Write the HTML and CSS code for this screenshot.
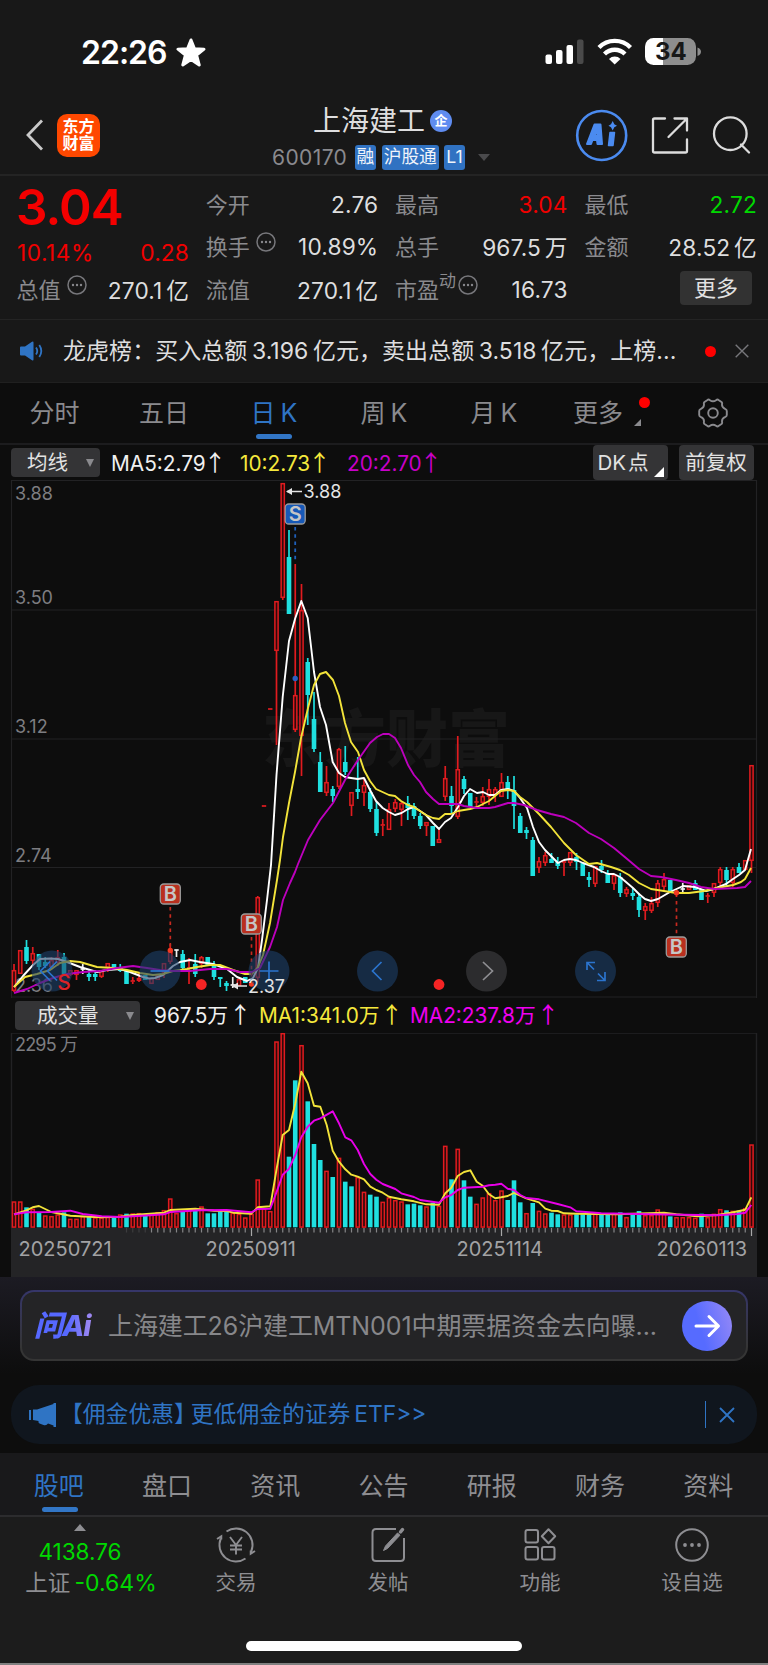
FILE: index.html
```html
<!DOCTYPE html>
<html lang="zh-CN">
<head>
<meta charset="utf-8">
<title>上海建工 600170</title>
<link rel="stylesheet" href="styles.css">
</head>
<body>
<div class="phone">
  <div class="status">
    <div class="clock"><span class="time">22:26</span>
      <svg width="30" height="30" viewBox="-15 -15 30 30"><path d="M0-13 3.500-4.200 13-3.800 5.600 2.200 8.200 12 0 6.600-8.200 12-5.600 2.200-13-3.800-3.500-4.200Z" fill="#fff" stroke="#fff" stroke-width="3" stroke-linejoin="round"/></svg>
    </div>
    <svg class="status-icons" width="160" height="30" viewBox="545 37 160 30">
      <g fill="#fff"><rect x="545.500" y="54.500" width="6.500" height="9.500" rx="2"/><rect x="556" y="50" width="6.500" height="14" rx="2"/><rect x="566.500" y="45" width="6.500" height="19" rx="2"/><rect x="577" y="39.500" width="6.500" height="24.500" rx="2" fill="#4a4a4a"/></g>
      <g fill="none" stroke="#fff" stroke-width="4.300"><path d="M599 47.500a22 22 0 0 1 31.500 0"/><path d="M604.500 54a14.500 14.500 0 0 1 20.500 0"/></g>
      <path d="M609 59a8 8 0 0 1 11.500 0L614.700 64.500Z" fill="#fff"/>
      <clipPath id="bat"><rect x="645" y="38" width="51" height="27" rx="8.500"/></clipPath>
      <g clip-path="url(#bat)"><rect x="645" y="38" width="18" height="27" fill="#fff"/><rect x="663" y="38" width="33" height="27" fill="#8e8e8e"/></g>
      <path d="M697.500 47.500q3.500 1.500 3.500 4.300t-3.500 4.300Z" fill="#8e8e8e"/>
      <text x="670.800" y="60.300" class="bat-text" text-anchor="middle">34</text>
    </svg>
  </div>

  <header class="header">
    <div class="head-left">
      <svg width="20" height="34" viewBox="0 0 20 34"><path d="M17 2.500 3 17 17 31.500" fill="none" stroke="#c9c9c9" stroke-width="2.800"/></svg>
      <div class="logo"><span>东方</span><span>财富</span></div>
    </div>
    <div class="head-mid">
      <div class="title"><span>上海建工</span><i class="corp">企</i></div>
      <div class="sub"><span class="code">600170</span><b class="tag">融</b><b class="tag">沪股通</b><b class="tag">L1</b><i class="drop"></i></div>
    </div>
    <svg class="head-right" width="180" height="60" viewBox="574 105 180 60">
      <circle cx="601.700" cy="135.500" r="24.500" fill="none" stroke="#4b8bf0" stroke-width="2.600"/>
      <g fill="#4b8bf0" stroke="#4b8bf0" stroke-linejoin="round"><path fill-rule="evenodd" stroke-width="2" d="M594.500 124.500h6l1.500 19.500h-4.500l-.5-4h-4.500l-1.500 4h-4Z M597 129.500l-2.500 6.500h3Z"/><path stroke-width="1.500" d="M610 132.500h4.500l-1.500 13h-4.500Z"/><path stroke="none" d="M612.700 121 614.300 124.200 617 125.700 614.300 127.200 612.700 130.500 611 127.200 608.500 125.700 611 124.200Z"/></g>
      <g fill="none" stroke="#dcdcdc" stroke-width="2.300" stroke-linecap="round" stroke-linejoin="round"><path d="M665 118.500h-10.500q-1.500 0-1.500 1.500v31q0 1.500 1.500 1.500h31q1.500 0 1.500-1.500v-11.500M674.500 118.500h12.500v12M686.500 119 668.500 137"/><circle cx="730.300" cy="133.700" r="16.300"/><path d="M741 144.500 749 152.500"/></g>
    </svg>
  </header>

  <section class="quote">
    <div class="big">3.04</div>
    <div class="cell r1 c2"><span>今开</span><b>2.76</b></div>
    <div class="cell r1 c3"><span>最高</span><b class="red">3.04</b></div>
    <div class="cell r1 c4"><span>最低</span><b class="green">2.72</b></div>
    <div class="cell pct"><b class="red p1">10.14%</b><b class="red">0.28</b></div>
    <div class="cell r2 c2"><span>换手<svg class="dots" viewBox="0 0 20 20"><use href="#dots"/></svg></span><b>10.89%</b></div>
    <div class="cell r2 c3"><span>总手</span><b>967.5 万</b></div>
    <div class="cell r2 c4"><span>金额</span><b>28.52 亿</b></div>
    <div class="cell r3 c1"><span>总值<svg class="dots" viewBox="0 0 20 20"><use href="#dots"/></svg></span><b>270.1 亿</b></div>
    <div class="cell r3 c2"><span>流值</span><b>270.1 亿</b></div>
    <div class="cell r3 c3"><span>市盈<sup>动</sup><svg class="dots tight" viewBox="0 0 20 20"><use href="#dots"/></svg></span><b>16.73</b></div>
    <div class="cell r3 c4 more"><button class="more-btn">更多</button></div>
  </section>
  <svg class="defs" width="0" height="0"><defs><g id="dots"><circle cx="10" cy="10" r="9" fill="none" stroke="#77777b" stroke-width="1.500"/><circle cx="6" cy="10" r="1.200" fill="#88888c"/><circle cx="10" cy="10" r="1.200" fill="#88888c"/><circle cx="14" cy="10" r="1.200" fill="#88888c"/></g></defs></svg>

  <section class="news">
    <svg width="24" height="20" viewBox="0 0 24 20"><path d="M1 5.500h4L12 .8Q13.500 0 13.500 1.500V18.500Q13.500 20 12 19.200L5 14.500H1Q0 14.500 0 13.500V6.500Q0 5.500 1 5.500Z" fill="#2f74c4"/><path d="M16 6.500q2.500 3.500 0 7M19.300 4q4 6 0 12" fill="none" stroke="#2f74c4" stroke-width="1.800"/></svg>
    <span class="news-text">龙虎榜：买入总额 3.196 亿元，卖出总额 3.518 亿元，上榜...</span>
    <i class="dot"></i>
    <svg class="close" width="14" height="14" viewBox="0 0 14 14"><path d="M.7.7 13.300 13.300M13.300.7.7 13.300" stroke="#77777b" stroke-width="1.400"/></svg>
  </section>

  <nav class="periods">
    <span>分时</span><span>五日</span><span class="on">日 K</span><span>周 K</span><span>月 K</span>
    <span class="more-tab">更多<i class="badge"></i><i class="corner"></i></span>
    <span class="gear"><svg width="30" height="30" viewBox="-15 -15 30 30" fill="none" stroke="#8a8a8e" stroke-width="1.900"><path stroke-linejoin="round" d="M-5.500-13 Q-4.500-14-3-12.800 Q0-10.600 3-12.800 Q4.500-14 5.500-13 L8.500-11 Q9.500-10 9-8.500 Q8.800-5.500 12-4.200 Q13.800-3.500 13.800-2 V2 Q13.800 3.500 12 4.200 Q8.800 5.500 9 8.500 Q9.500 10 8.500 11 L5.500 13 Q4.500 14 3 12.800 Q0 10.600-3 12.800 Q-4.500 14-5.500 13 L-8.500 11 Q-9.500 10-9 8.500 Q-8.800 5.500-12 4.200 Q-13.800 3.500-13.800 2 V-2 Q-13.800-3.500-12-4.200 Q-8.800-5.500-9-8.500 Q-9.500-10-8.500-11Z"/><circle r="4.800"/></svg></span>
  </nav>

  <div class="tools">
    <button class="sel s1">均线<i></i></button>
    <span class="ma w">MA5:2.79<u>↑</u></span><span class="ma y">10:2.73<u>↑</u></span><span class="ma m">20:2.70<u>↑</u></span>
    <button class="sq dk">DK 点<i></i></button><button class="sq">前复权</button>
  </div>
  <svg id="kline" class="kline" width="768" height="518" viewBox="0 480 768 518"></svg>

  <div class="tools vol-tools">
    <button class="sel s2">成交量<i></i></button>
    <span class="ma w">967.5万<u>↑</u></span><span class="ma y">MA1:341.0万<u>↑</u></span><span class="ma m">MA2:237.8万<u>↑</u></span>
  </div>
  <svg id="volume" class="volume" width="768" height="195" viewBox="0 1033 768 195"></svg>
  <div class="axis">
    <svg id="ticks" class="ticks" width="746" height="10" viewBox="11 0 746 10"></svg>
    <div class="dates"><span class="d1">20250721</span><span class="d2">20250911</span><span class="d3">20251114</span><span class="d4">20260113</span></div>
  </div>

  <section class="ask">
    <div class="ask-box">
      <span class="ask-logo">问Ai</span>
      <span class="ask-text">上海建工26沪建工MTN001中期票据资金去向曝...</span>
      <svg width="50" height="50" viewBox="0 0 50 50"><defs><linearGradient id="g" x1="0" x2="1" y1=".6" y2=".3"><stop offset=".35" stop-color="#566bff"/><stop offset="1" stop-color="#9187f7"/></linearGradient></defs><circle cx="25" cy="25" r="25" fill="url(#g)"/><path d="M14 25h22M27 15.500 36.500 25 27 34.500" fill="none" stroke="#fff" stroke-width="3" stroke-linecap="round" stroke-linejoin="round"/></svg>
    </div>
  </section>

  <section class="promo">
    <svg width="27" height="24" viewBox="0 0 27 24" fill="#2f74c4"><path d="M0 7h2v10H0ZM4 6.500h4L24.500 1V0H27V24H24.500V22.500L19 20.500Q17.500 23 14.500 22L10.500 20.500Q9 19.500 9.500 18L4 17Z"/></svg>
    <span class="promo-text"><span class="bracket">【佣金优惠】</span>更低佣金的证券 ETF&gt;&gt;</span>
    <i class="bar"></i>
    <svg class="close" width="16" height="16" viewBox="0 0 16 16"><path d="M1 1 15 15M15 1 1 15" stroke="#2f74c4" stroke-width="1.800"/></svg>
  </section>

  <nav class="sections">
    <span class="on">股吧</span><span>盘口</span><span>资讯</span><span>公告</span><span>研报</span><span>财务</span><span>资料</span>
  </nav>

  <footer class="bottom">
    <div class="index"><i></i><b>4138.76</b><span>上证 <em>-0.64%</em></span></div>
    <div class="act"><svg width="40" height="36" viewBox="-20 -18 40 36" fill="none" stroke="#8e8e92" stroke-width="1.900"><path d="M-9.500-13.500A16.500 16.500 0 0 1 15.200 6.500M9.500 13.500A16.500 16.500 0 0 1-15.200-6.500M-19-6-14.700-8.800V-5.500M19 6 14.700 8.800V5.500"/><path d="M-6-8 0 0 6-8M0 0V9.500M-6 .5H6M-6 4.500H6"/></svg><span>交易</span></div>
    <div class="act"><svg width="40" height="36" viewBox="-20 -18 40 36" fill="none" stroke="#8e8e92" stroke-width="2"><path d="M8-16H-12Q-15.500-16-15.500-12.500V12.500Q-15.500 16-12 16H12.500Q16 16 16 12.500V-7"/><path d="M-4.500 5.500-2.500 1 9.500-12 12-9.800-.5 3.500Z" fill="#8e8e92" stroke-width="1"/><path d="M12.500-13 14.500-15.500" stroke-width="3.500" stroke-linecap="round"/></svg><span>发帖</span></div>
    <div class="act"><svg width="40" height="36" viewBox="-20 -18 40 36" fill="none" stroke="#8e8e92" stroke-width="2"><rect x="-14.500" y="-15" width="12.500" height="12.500" rx="2"/><rect x="-14.500" y="2" width="12.500" height="12.500" rx="2"/><rect x="2" y="2" width="12.500" height="12.500" rx="2"/><path d="M8.500-15.700 15.200-8.700 8.500-1.700 1.800-8.700Z" stroke-linejoin="round"/></svg><span>功能</span></div>
    <div class="act"><svg width="40" height="36" viewBox="-20 -18 40 36" fill="none" stroke="#8e8e92" stroke-width="2"><circle r="15.800"/><g fill="#8e8e92" stroke="none"><circle cx="-7" r="1.900"/><circle r="1.900"/><circle cx="7" r="1.900"/></g></svg><span>设自选</span></div>
  </footer>
  <div class="home"><i></i></div>
</div>
<script src="chart.js"></script>
</body>
</html>
```

FILE: styles.css
```css
* { box-sizing: border-box; }
body {
  margin: 0;
  background: #0d0d0d;
  color: #dededf;
  font-family: Inter, "Noto Sans CJK SC", sans-serif;
  font-weight: 400;
}
i, em { font-style: normal; }
b { font-weight: 400; }
svg { display: block; flex: none; }
button { border: 0; padding: 0; margin: 0; background: #343436; color: #e2e2e2; font: inherit; border-radius: 4px; }
.phone { width: 768px; height: 1665px; overflow: hidden; display: flex; flex-direction: column; }
.phone > * { flex: none; }
.red { color: #f00000; }
.green { color: #00d800; }
.defs { position: absolute; }

.status { height: 104px; padding: 0 63px 0 81px; background: #181818; display: flex; justify-content: space-between; align-items: center; }
.clock { display: flex; align-items: center; gap: 9px; color: #fff; padding-top: 2px; }
.time { font-size: 32px; font-weight: 600; line-height: 40px; letter-spacing: -1px; width: 86px; white-space: nowrap; }
.bat-text { font-size: 24px; font-weight: 700; fill: #181818; }

.header { height: 72px; padding: 0 14px 8px 25px; background: #181818; border-bottom: 2px solid #242424; display: grid; grid-template-columns: 180px 1fr 180px; grid-template-rows: 62px; align-items: center; }
.head-left { display: flex; align-items: center; gap: 12px; }
.logo { width: 43px; height: 43px; border-radius: 10px; background: #ff4800; color: #fff; font-size: 16px; font-weight: 700; line-height: 17px; display: flex; flex-direction: column; align-items: center; justify-content: center; }
.head-mid { display: flex; flex-direction: column; padding-top: 7px; }
.title { display: flex; align-items: center; gap: 5px; height: 34px; font-size: 28px; padding-left: 108px; white-space: nowrap; }
.title span { margin-top: -2px; }
.corp { width: 22px; height: 22px; margin-top: 1px; border-radius: 11px; background: #5f8cf0; color: #fff; font-size: 13px; line-height: 21px; font-weight: 700; text-align: center; }
.sub { display: flex; align-items: center; gap: 5.500px; padding-left: 67px; height: 37px; padding-top: 3px; white-space: nowrap; }
.code { width: 77px; font-size: 21px; letter-spacing: .4px; color: #8a8a8e; }
.tag { height: 25px; padding: 0 2px; border-radius: 3px; background: #3072c2; color: #f0f4fa; font-size: 17.700px; line-height: 24px; }
.drop { margin-left: 8px; border: 6px solid transparent; border-top: 7px solid #4a4a4c; border-bottom: 0; }

.quote { height: 144px; padding: 7px 11px 0 17px; background: #181818; border-bottom: 1px solid #242424; display: grid; grid-template-columns: repeat(4, 172px); grid-template-rows: 42px 42px 42px; column-gap: 17.300px; font-size: 22px; }
.big { color: #f40000; font-size: 49.500px; line-height: 48px; font-weight: 600; letter-spacing: -.9px; margin-left: -1px; grid-row: 1; grid-column: 1; }
.cell { display: flex; align-items: center; justify-content: space-between; white-space: nowrap; height: 42px; }
.cell span { color: #8a8a8e; display: flex; align-items: center; margin-top: -3px; margin-left: -.5px; }
.cell b { font-size: 22.700px; word-spacing: -2.800px; letter-spacing: .15px; }
.cell sup { font-size: 17px; line-height: 17px; padding-bottom: 12px; }
.r1 { grid-row: 1; } .r2 { grid-row: 2; } .r3 { grid-row: 3; padding-top: 2px; }
.c1 { grid-column: 1; } .c2 { grid-column: 2; } .c3 { grid-column: 3; } .c4 { grid-column: 4; }
.pct { grid-row: 2; grid-column: 1; padding-top: 13px; }
.cell .p1 { letter-spacing: .5px; }
.dots { width: 20px; height: 20px; margin: 0 0 6px 6px; }
.tight { margin-left: 2px; }
.more { justify-content: flex-end; padding-right: 5px; padding-top: 0; }
.more-btn { width: 72px; height: 34px; font-size: 22px; line-height: 32px; background: #323232; }

.news { height: 63px; padding: 0 19px 0 20px; background: #181818; border-bottom: 1px solid #202020; display: flex; align-items: center; }
.news-text { margin: -4px 0 0 19px; width: 642px; font-size: 23px; white-space: nowrap; word-spacing: -2px; letter-spacing: .05px; }
.dot { width: 11px; height: 11px; border-radius: 50%; background: #f00; }
.close { margin-left: auto; }

.periods { height: 62px; border-bottom: 2px solid #1c1c1e; display: grid; grid-template-columns: 109px 110px 110px 110px 110px 98px 1fr; font-size: 25px; line-height: 60px; text-align: center; color: #8a8a8e; white-space: nowrap; word-spacing: -2px; }
.periods span { position: relative; }
.periods .on, .sections .on { color: #2f74c4; }
.periods .on::after, .sections .on::after { content: ""; position: absolute; left: 50%; margin-left: -18px; bottom: 4px; width: 36px; height: 5px; border-radius: 2.500px; background: #3276c6; }
.badge { position: absolute; left: 90px; top: 14px; width: 11px; height: 11px; border-radius: 50%; background: #f00; }
.corner { position: absolute; left: 85px; top: 36px; border-left: 7px solid transparent; border-bottom: 7px solid #8a8a8e; }
.gear { display: flex; justify-content: center; align-items: center; padding-left: 11px; }

.tools { height: 35px; padding: 0 14.500px 0 11px; display: flex; align-items: center; font-size: 20.500px; white-space: nowrap; }
.sel { height: 29px; display: flex; align-items: center; justify-content: space-between; line-height: 28px; }
.sel i { border: 4.500px solid transparent; border-top: 8px solid #8a8a8e; border-bottom: 0; }
.s1 { width: 89px; padding: 0 6px 0 16px; margin-right: 11px; font-size: 20.500px; }
.s2 { width: 125px; padding: 0 6px 0 22px; margin-right: 14px; font-size: 20.500px; }
.ma { font-size: 20.800px; line-height: 33px; height: 32px; }
.ma u { text-decoration: none; font-family: "Noto Sans CJK SC", sans-serif; font-size: 22.500px; line-height: 20px; margin-left: -2px; }
.w { color: #f0f0f0; } .y { color: #f5e83c; } .m { color: #c800c8; }
.tools .w { width: 129px; } .tools .y { width: 107px; }
.vol-tools { padding-left: 15px; }
.vol-tools .w { width: 105px; } .vol-tools .y { width: 151px; }
.vol-tools .m { color: #f000f0; }
.vol-tools .ma { line-height: 32px; }
.vol-tools .ma u { margin-left: 1px; }
.sq { width: 75px; height: 35px; line-height: 34px; margin-left: 11px; font-size: 20.500px; position: relative; word-spacing: -4px; }
.tools .dk { margin-left: auto; padding-right: 14px; }
.dk i { position: absolute; right: 4px; bottom: 3px; border-left: 10px solid transparent; border-bottom: 10px solid #fff; }

.kline text, .volume text { font-size: 18px; fill: #7d7d81; }
.kline .lab { fill: #e4e4e4; }
.kline .water { font-family: "Noto Sans CJK SC", sans-serif; font-size: 62px; font-weight: 900; fill: #171717; }
.kline .flag { font-size: 20px; font-weight: 600; fill: #c6c6c6; text-anchor: middle; }
.kline .sell { font-size: 21px; font-weight: 500; fill: #dc2328; text-anchor: middle; }

.axis { height: 49px; margin: 0 11px; background: #242426; color: #a2a2a4; font-size: 20px; }
.dates { display: grid; grid-template-columns: 187px 251px 200px 1fr; padding-left: 7.500px; line-height: 22px; }

.ask { height: 108px; padding: 13px 20px 0; background: linear-gradient(#1c1b23, #0d0d0d 90%); }
.ask-box { height: 71px; border: 2px solid transparent; border-radius: 14px; background: linear-gradient(#242426, #242426) padding-box, linear-gradient(#36366a, #353535 80%) border-box; padding: 0 14px 0 12px; display: flex; align-items: center; }
.ask-logo { width: 74px; font-size: 29px; line-height: 34px; font-weight: 800; font-style: italic; letter-spacing: -1px; background: linear-gradient(90deg, #5668ff 45%, #a58bf0 80%); background-clip: text; -webkit-background-clip: text; color: transparent; }
.ask-text { width: 574px; margin-top: -3px; font-size: 25px; color: #87878a; white-space: nowrap; letter-spacing: -.1px; }

.promo { height: 59px; margin: 0 11px; padding: 0 22px 0 18px; border-radius: 28px; background: #10161e; color: #2f74c4; display: flex; align-items: center; }
.promo-text { font-size: 22.800px; white-space: nowrap; margin: -5px 0 0 4px; word-spacing: -2.500px; }
.bracket { margin-right: -6px; }
.bar { margin-left: auto; width: 1.500px; height: 27px; background: #2f74c4; }
.promo .close { margin-left: 13px; }

.sections { height: 64px; margin-top: 9px; padding: 0 5.500px 0 4.500px; background: #19191b; border-bottom: 2px solid #2c2c2e; display: grid; grid-template-columns: repeat(7, 1fr); text-align: center; font-size: 25px; line-height: 66px; color: #8e8e92; }
.sections span { position: relative; height: 62px; }
.sections .on::after { bottom: 3px; margin-left: -17px; }
.bottom { height: 84px; background: #1c1c1c; display: grid; grid-template-columns: 160px repeat(4, 152px); color: #8e8e92; white-space: nowrap; }
.index { display: flex; flex-direction: column; align-items: center; padding-top: 7px; font-size: 22.500px; }
.index i { border: 6.500px solid transparent; border-bottom: 7px solid #8e8e92; border-top: 0; }
.index b { line-height: 26px; margin-top: 8px; color: #00d800; }
.index span { line-height: 30px; margin-top: 3px; padding-left: 22px; word-spacing: -2px; }
.index em { color: #00d800; font-size: 23px; }
.act { display: flex; flex-direction: column; align-items: center; padding-top: 10px; font-size: 20.500px; }
.act span { line-height: 30px; margin-top: 5px; }
.home { height: 64px; background: #1c1c1c; border-bottom: 2px solid #808080; padding-top: 40px; }
.home i { display: block; width: 276px; height: 10px; margin: 0 auto; border-radius: 5px; background: #fff; }
```

FILE: chart.js
```js
const RED = '#e11b1f', CYAN = '#1fe0e0';
const x = i => 14 + 6.25 * i;
const line = (x1, y1, x2, y2, c, w = 1.7, extra = '') =>
  `<path d="M${x1} ${y1}L${x2} ${y2}" stroke="${c}" stroke-width="${w}" fill="none" ${extra}/>`;

// Candles: colour, high, body top, body bottom, low
const candles = `r 964 970 991 992;r 950 950 974 974;c 940 947 961 964;r 947 953 961 964;c 954 954 967 970;c 957 962 966 968;r 957 960 967 970;r 950 957 963 966;c 953 957 974 975;r 970 970 975 976;r 970 970 975 980;w 964 969 969 974;c 970 974 977 981;c 970 974 977 981;r 971 971 977 978;r 963 963 968 972;c 964 964 968 968;c 964 968 971 972;c 970 970 984 984;r 977 981 982 984;r 973 978 981 982;c 975 975 980 980;r 978 978 984 984;r 975 975 980 980;r 963 963 973 978;r 944 951 962 964;w 950 950 950 957;c 950 954 968 970;r 958 968 969 984;c 954 964 974 977;r 956 957 964 968;c 957 957 966 966;c 961 965 977 980;c 977 977 979 987;c 981 983 986 991;w 977 985 986 988;r 979 979 986 986;c 977 977 983 983;r 982 982 985 986;r 896 897 978 982;r 806 806 806 806;r 709 709 709 709;r 601 601 651 745;r 483 483 598 600;c 530 557 614 614;r 564 695 730 732;r 584 610 736 776;c 658 662 695 725;c 692 719 749 752;c 752 762 792 792;r 766 782 793 796;c 786 789 796 802;r 748 749 787 789;c 746 762 772 775;r 792 792 806 816;c 757 789 792 799;r 778 785 793 806;c 788 792 809 812;c 802 809 833 836;r 819 825 826 836;r 803 809 830 830;r 799 802 809 812;r 802 803 810 826;c 796 803 808 820;c 803 806 816 819;c 813 816 826 829;r 822 822 826 836;c 826 826 846 846;r 828 839 843 843;r 766 778 797 801;c 786 796 806 814;r 736 769 817 819;c 776 779 789 794;c 793 793 807 807;r 797 802 803 807;r 787 796 803 806;r 779 789 797 805;r 787 789 795 802;r 773 782 797 797;c 776 782 789 799;c 776 790 806 829;c 813 816 833 833;c 827 830 833 839;c 837 840 876 876;r 857 861 868 873;r 852 855 863 866;c 853 859 863 863;c 857 862 866 869;r 860 862 863 876;r 852 852 863 866;c 853 857 862 870;c 863 863 876 876;c 872 877 880 887;r 866 866 884 887;c 860 866 870 873;c 870 873 883 883;r 875 875 884 890;c 873 877 893 897;r 887 889 894 897;c 888 893 896 900;c 893 897 910 917;r 903 906 911 920;r 897 903 911 913;r 880 883 903 907;r 873 879 887 890;c 880 880 891 891;r 890 892 893 897;w 883 889 889 893;r 885 885 890 890;c 880 883 890 890;c 889 889 900 900;r 893 896 897 903;r 883 883 893 897;r 867 869 883 887;c 867 870 880 887;r 867 869 883 887;c 863 867 873 873;r 860 860 870 870;r 765 765 861 873`.split(';').map(s => s.split(' '));

const candle = ([c, ...v], i) => {
  const [hi, top, bot, lo] = v.map(Number), cx = x(i);
  const col = c === 'r' ? RED : c === 'c' ? CYAN : '#f0f0f0';
  let s = '';
  if (bot - top < 2) s += line(cx - 2.2, top, cx + 2.2, top, col, 1.7);
  else if (c === 'c') s += `<rect x="${cx - 2.3}" y="${top}" width="4.6" height="${bot - top}" fill="${col}"/>`;
  else s += `<rect x="${cx - 1.6}" y="${top + .7}" width="3.2" height="${bot - top - 1.4}" fill="#30090a" stroke="${col}" stroke-width="1.5"/>`;
  if (top > hi) s += line(cx, hi, cx, top, col);
  if (lo > bot) s += line(cx, bot, cx, lo, col);
  return s;
};

// Moving-average line through "x,y x,y ..." points
const curve = (pts, col, w = 1.9) =>
  `<polyline points="${pts}" fill="none" stroke="${col}" stroke-width="${w}" stroke-linejoin="round"/>`;

const ma5 = '14,987 23,976 33,965 40,959 50,958.5 58,959 67,962 80,967 97,972 107,970 120,969 130,972 143,977 149,978.5 155,978 163,975 173,966 180,962 190,960 200,962 213,964 227,969 237,977 247,981 253,978 258,968 262,940 267,900 271,865 276.5,775 282.7,697 289,641 295,619 301.3,601 307.7,618 314,672 320,707 326,725 332.7,762 339,773 345,777 351,778 357.7,779 364,778 370,790 376,801 382.7,808 389,812 395,815 401.5,813 408,809 414,807 420,811 426,815 433,823 439,829 445,822 451,818 458,807 464,796 470,789 477,793 483,792 489,795 495,795 501,790 508,789 514,791 520,798 527,808 533,827 539,842 545,850 551,856 558,863 564,860 570,859 576,860 583,863 594,867 601,871 608,874 614,874 620,877 626,882 633,888 639,894 645,899 651,901 658,899 670,892 683,886 695,887 706,891 714,889 726,884 733,879 739,875 745,870 751,849';
const ma10 = '14,987 25,977 37,974 50,970 60,963 70,961 80,962 97,967 113,968 127,970 140,973 153,975 163,974 173,971 187,969 197,967 210,965 220,965 233,970 245,974 252,974 258,967 263,955 270,923 277,880 280,860 283,837 289,803 295,772 301,738 308,708 314,685 320,674 326,672 333,680 339,696 345,723 351,742 358,752 364,770 370,781 376,789 389,795 395,796 401,801 408,805 414,807 420,811 426,815 433,818 439,819 445,814 451,814 458,811 470,809 477,807 483,804 489,801 495,796 501,791 508,790 514,791 520,797 527,802 539,814 551,827 564,843 576,855 589,864 597,863 604,865 611,867 620,870 629,875 639,883 651,889 664,891 676,893 689,893 704,891 717,888 733,885 741,882 745,879 751,868';
const ma20 = '14,993 27,989 40,983 53,978 67,974 83,972 100,971 117,968 133,966 147,968 160,970 173,971 190,971 210,969 227,969 240,972 252,972 260,968 270,947 277,927 283,900 290,883 295,872 298,864 308,840 320,820 333,803 345,780 358,760 370,743 377,737 383,734 389,734 395,738 401,748 408,765 414,775 420,782 426,792 433,799 439,804 458,804 464,806 477,808 489,808 495,807 508,803 514,803 524,805 537,810 551,814 564,817 576,823 589,833 601,839 614,848 626,858 639,869 651,876 661,877 676,880 689,883 701,887 714,889 737,888 745,887 751,881';

const grid = '#222224';
const flag = (cx, cy, t, fill) =>
  `<rect x="${cx - 10}" y="${cy - 10}" width="20" height="20" rx="3.5" fill="${fill}" stroke="#9b9b9b" stroke-width="1.3"/><text class="flag" x="${cx}" y="${cy + 7.3}">${t}</text>`;
const dash = 'stroke-dasharray="3.5 3.7"';
const disc = (cx, glyph, gray) =>
  `<circle cx="${cx}" cy="971" r="20.500" fill="${gray ? '#2c2c2e' : '#1d3f69'}" fill-opacity="${gray ? 1 : .6}"/><path d="${glyph}" fill="none" stroke="${gray ? '#8e8e92' : '#2b74cd'}" stroke-width="1.700"/>`;

document.getElementById('kline').innerHTML =
  `<text class="water" x="262" y="762">东方财富</text>` +
  `<path d="M11.500 998V480.500H756.500V998M11 610H757M11 739H757M11 867.500H757M11 997H757" fill="none" stroke="${grid}" stroke-width="1.200"/>` +
  `<text x="15" y="500">3.88</text><text x="15" y="604">3.50</text><text x="15" y="733">3.12</text><text x="15" y="862">2.74</text><text x="15" y="991.500">2.36</text>` +
  candles.map(candle).join('') +
  curve(ma5, '#fff') + curve(ma10, '#f2e33a') + curve(ma20, '#bd00bd') +
  `<circle cx="170.300" cy="950.500" r="2.700" fill="#f23a22"/><circle cx="251.500" cy="984" r="2.700" fill="#f23a22"/><circle cx="676.500" cy="892.700" r="2.700" fill="#f23a22"/><circle cx="295.200" cy="678.500" r="2.700" fill="#2d5fc4"/>` +
  line(295.2, 527, 295.2, 560, '#1f60bb', 1.8, dash) + line(170.3, 907, 170.3, 950, '#c72a20', 1.7, dash) +
  line(251.5, 937, 251.5, 980, '#c72a20', 1.7, dash) + line(676.5, 901, 676.5, 935, '#c72a20', 1.7, dash) +
  flag(295.2, 514, 'S', '#1759b8') + flag(170.3, 894, 'B', '#b9301f') + flag(251.3, 924, 'B', '#b9301f') + flag(676.3, 947, 'B', '#b9301f') +
  `<path d="M287 491.500H302M233 986H247" stroke="#e4e4e4" stroke-width="1.700"/><path d="M286 491.500l6-3.500v7ZM232 986l6-3.500v7Z" fill="#e4e4e4"/>` +
  `<text class="lab" x="303.500" y="498">3.88</text>` +
  disc(52, 'M50 961.500 40.500 971 50 980.500M57 961.500 47.500 971 57 980.500') +
  disc(160, 'M150.500 971H169.500') + disc(269, 'M259.500 971H278.500M269 961.500V980.500') +
  disc(377.5, 'M381.500 962 372.500 971 381.500 980') + disc(486.5, 'M483 962 492.500 971 483 980', true) +
  disc(595.5, 'M587 970V962.500H595M587 962.500 594 969.500M605 972V980.500H597M605 980.500 598 973.500') +
  `<text class="lab" x="248" y="992.500">2.37</text>` +
  `<text class="sell" x="64" y="989.500">S</text><circle cx="201.300" cy="984.500" r="5.400" fill="#f52424"/><circle cx="439" cy="984.500" r="5.400" fill="#f52424"/>`;

// Volume bars: colour followed by the bar's top on a scale of three units per pixel
const vols = 'r604 r604 c622 r626 c637 r646 r648 r643 c637 r656 r656 r648 c648 r652 r652 r650 c653 r643 c641 r640 r639 c648 r642 r636 r630 r595 r639 c636 r630 c629 r619 c640 c640 c634 c633 r638 r641 r652 r641 r538 r625 r633 r124 r99 c470 c241 r135 c304 c432 c480 r512 c531 r473 c545 c559 r531 r575 c584 c590 r605 r592 r600 r604 c613 c611 c616 r619 c608 r617 r437 c538 r446 c541 c590 r611 r592 r579 r600 r571 c600 c541 c607 r639 c609 r632 r640 c638 c643 r643 r643 c643 c643 c643 r641 c641 c641 r641 c637 r651 c645 c633 r645 r645 r628 r641 c649 r651 r651 r651 r653 c641 r651 r641 r627 c631 r632 c632 r624 r433'.split(' ');
const vy = v => 1000 + v / 3;
const scaled = s => s.split(' ').map(p => { const [a, b] = p.split(','); return `${(a / 3).toFixed(1)},${vy(b).toFixed(1)}`; }).join(' ');
const vma1 = '42,643 79,631 98,622 117,618 154,636 211,647 267,650 305,652 361,650 398,645 450,641 492,638 511,630 586,626 642,632 680,633 700,638 754,641 773,622 811,619 830,505 848,405 867,390 886,310 904,215 923,250 942,317 961,320 980,375 998,452 1017,485 1036,508 1054,524 1073,530 1092,538 1111,560 1129,570 1148,578 1167,590 1204,598 1242,604 1279,613 1317,614 1336,580 1354,563 1373,528 1392,516 1411,511 1430,545 1448,557 1467,583 1486,595 1504,592 1523,588 1542,579 1579,595 1617,607 1636,626 1654,632 1673,633 1692,640 1729,641 1852,643 1992,638 2029,643 2092,649 2152,645 2192,638 2236,629 2254,592';
const vma2 = '42,643 79,637 154,636 211,632 248,642 305,649 361,651 450,646 492,643 511,636 600,631 680,630 754,637 773,627 811,626 830,575 848,524 867,506 886,465 904,412 923,380 942,362 961,355 998,334 1017,370 1036,412 1054,421 1073,450 1092,492 1111,522 1129,539 1148,552 1186,567 1204,580 1242,591 1261,600 1317,608 1336,592 1354,585 1373,570 1392,563 1448,560 1467,556 1486,554 1504,551 1523,566 1542,570 1561,585 1579,594 1617,598 1673,612 1711,622 1729,634 1804,640 1952,643 2052,644 2152,646 2212,642 2236,638 2254,615';
document.getElementById('volume').innerHTML =
  `<path d="M11.500 1228V1033H756.500V1228" fill="none" stroke="${grid}" stroke-width="1.400"/><text x="15" y="1050.500" textLength="63">2295 万</text>` +
  vols.map((s, i) => {
    const y = vy(+s.slice(1)), h = 1227.3 - y;
    return s[0] === 'c'
      ? `<rect x="${x(i) - 2.3}" y="${y}" width="4.6" height="${h}" fill="${CYAN}"/>`
      : `<rect x="${x(i) - 1.6}" y="${y + .7}" width="3.2" height="${h - .9}" fill="#30090a" stroke="${RED}" stroke-width="1.5"/>`;
  }).join('') + curve(scaled(vma1), '#f2e33a') + curve(scaled(vma2), '#e800e8');

let ticks = '';
for (let i = 18; i < 119; i++) {
  const major = i === 38 || i === 78 || i === 118;
  ticks += line(x(i), 0, x(i), major ? 8 : 4.5, major ? '#a8a8a8' : i < 22 ? '#3c3c3e' : '#858587', 1.2);
}
document.getElementById('ticks').innerHTML = ticks;
```
